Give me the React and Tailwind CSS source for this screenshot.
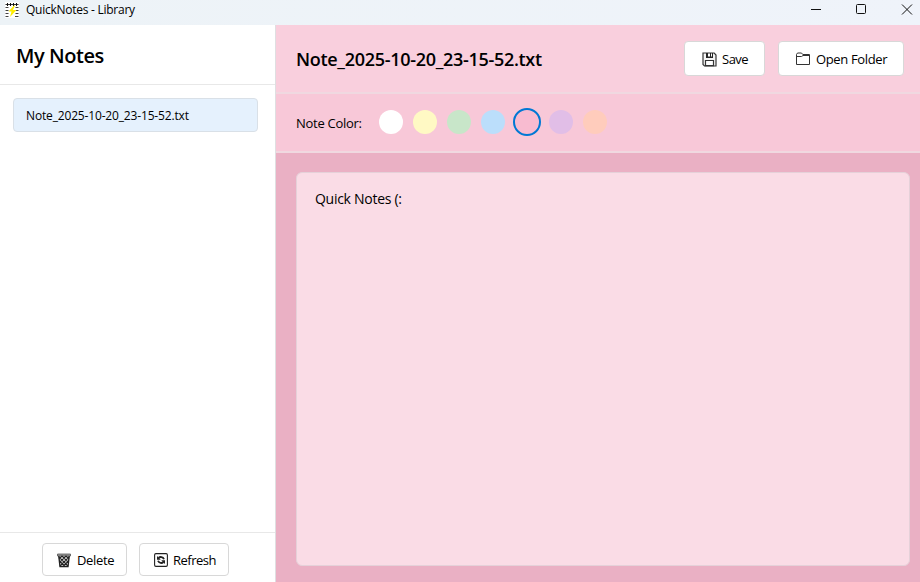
import React from "react";

const swatches = [
  { name: "White", color: "bg-white" },
  { name: "Yellow", color: "bg-[#fff9c4]" },
  { name: "Green", color: "bg-[#c8e6c9]" },
  { name: "Blue", color: "bg-[#bbdefb]" },
  { name: "Pink", color: "bg-[#f8bbd0]", selected: true },
  { name: "Purple", color: "bg-[#e1bee7]" },
  { name: "Orange", color: "bg-[#ffccbc]" },
];

function NotepadIcon() {
  return (
    <svg width="14" height="16" viewBox="0 0 14 16" className="shrink-0">
      <rect width="14" height="16" fill="#fff" />
      <path d="M.5 2.5h13" stroke="#333" strokeWidth="1" />
      <path d="M2.5 1v3M5.5 1v3M8.5 1v3M11.5 1v3" stroke="#111" />
      <path d="M.5 5.5h3M10.5 5.5h3M.5 8.5h3M11 8.5h2.5M.5 11.5h3M10.5 11.5h3M.5 14.5h3M10 14.5h3.5" stroke="#444" />
      <path d="M9 3.5 3.5 9.5h3L5 15l6.5-7H8l2-4.5z" fill="#ffee00" />
    </svg>
  );
}

function SaveIcon() {
  return (
    <svg width="15" height="15" viewBox="0 0 15 15" fill="none" className="shrink-0">
      <path d="M1 1h11.2L14 3v11H2.5L1 12.5z" fill="#f4f4f4" stroke="#353535" strokeWidth="1.2" />
      <path d="M4 1h7v5H4z" fill="#252525" />
      <path d="M6 1.5h2v3H6zM9 1.5h1V4.5H9z" fill="#fff" />
      <path d="M3.5 13.7V8.5h8v5.2z" fill="#fff" stroke="#353535" strokeWidth="1.2" />
    </svg>
  );
}

function FolderIcon() {
  return (
    <svg width="15" height="14" viewBox="0 0 15 14" fill="none" stroke="#333" className="shrink-0">
      <path d="M.5 12.5v-10l1-1.5h4l1.3 1.5h6.7v10zM.5 4.5h5L7 3.5h6.5" />
    </svg>
  );
}

function TrashIcon() {
  return (
    <svg width="14" height="15" viewBox="0 0 14 15" fill="none" stroke="#222" className="shrink-0">
      <path d="M.5 1h13v2H.5z" fill="#999" stroke="#555" strokeWidth=".8" />
      <path d="m1.8 3 1.2 10.5h8L12.2 3" strokeWidth="1.4" />
      <path d="m2 4 9 9M5 3l6.5 6.5M9 3l3 3M2.5 8l5 5M12 4l-9 9M9 3 2.5 9.5M5 3 2 6M11.5 8l-5 5" strokeWidth="1.2" />
    </svg>
  );
}

function RefreshIcon() {
  return (
    <svg width="14" height="14" viewBox="0 0 14 14" fill="none" stroke="#222" className="shrink-0">
      <rect x=".6" y=".6" width="12.8" height="12.8" rx="1.3" strokeWidth="1.1" />
      <path d="M4.5 5C6 3.5 9 3.6 10 6.2M9.5 9C8 10.5 5 10.4 4 7.8" strokeWidth="1.8" />
      <path d="M3 3v3.8h3.8zM11 11V7.2H7.2z" fill="#222" stroke="none" />
    </svg>
  );
}

function Button({ icon, children, className }) {
  return (
    <button className={`flex items-center rounded-[4px] border border-[#d8d8d8] bg-white pt-px text-[13px] text-black ${className}`}>
      {icon}
      <span className="pt-[2px] whitespace-nowrap">{children}</span>
    </button>
  );
}

function TitleBar() {
  return (
    <header className="flex h-[25px] shrink-0 items-start bg-linear-to-r from-[#edf3f7] to-[#eff3fa]">
      <div className="flex items-center gap-[7px] pt-px pl-[5px]">
        <NotepadIcon />
        <span className="text-[12px] leading-[18px] tracking-[-0.26px] whitespace-nowrap">QuickNotes - Library</span>
      </div>
      <svg width="110" height="18" viewBox="0 0 110 18" fill="none" stroke="#111" className="ml-auto">
        <path d="M1 9.5h10" />
        <rect x="46.5" y="4.5" width="9" height="9" rx="1" />
        <path d="m92 4.5 10 10M102 4.5l-10 10" />
      </svg>
    </header>
  );
}

export default function App() {
  return (
    <div className="flex h-[582px] w-[920px] flex-col overflow-hidden bg-white font-['Segoe_UI','Open_Sans','Noto_Sans',sans-serif] text-black">
      <TitleBar />
      <div className="flex min-h-0 flex-1">
        <aside className="flex w-[276px] shrink-0 flex-col border-r border-[#dfdfe1]">
          <div className="flex h-[60px] items-center border-b border-[#e8e8e8] pt-[3px] pl-4">
            <h1 className="text-[20px] leading-6 font-semibold tracking-[-0.45px] whitespace-nowrap">My Notes</h1>
          </div>
          <div className="flex-1 pt-[13px] pr-[17px] pl-[13px]">
            <div className="flex h-[34px] items-center rounded-[4px] border border-[#d9e0e7] bg-[#e5f1fd] pt-[2px] pl-3 text-[12px] tracking-[-0.16px]">
              Note_2025-10-20_23-15-52.txt
            </div>
          </div>
          <div className="flex h-[50px] items-start gap-3 border-t border-[#e8e8e8] pt-[10px] pl-[42px]">
            <Button icon={<TrashIcon />} className="h-[33px] w-[85px] gap-[6px] pl-[14px] tracking-[-0.35px]">Delete</Button>
            <Button icon={<RefreshIcon />} className="h-[33px] w-[90px] gap-[5px] pl-[14px] tracking-[-0.5px]">Refresh</Button>
          </div>
        </aside>
        <main className="flex min-w-0 flex-1 flex-col bg-[#eab0c4]">
          <div className="flex h-[69px] shrink-0 items-center border-b-2 border-[#f0d8e0] bg-[#f9cfdd] pr-4 pl-5">
            <h2 className="pt-[2px] text-[18px] font-semibold tracking-[-0.3px] whitespace-nowrap">Note_2025-10-20_23-15-52.txt</h2>
            <div className="ml-auto flex gap-[13px]">
              <Button icon={<SaveIcon />} className="h-[35px] w-[81px] gap-[5px] pl-[17px] tracking-[-0.5px]">Save</Button>
              <Button icon={<FolderIcon />} className="h-[35px] w-[126px] gap-[5px] pl-[17px] tracking-[-0.36px]">Open Folder</Button>
            </div>
          </div>
          <div className="flex h-[59px] shrink-0 items-center border-b-2 border-[#f0d8e0] bg-[#f8c8d8] pl-5">
            <span className="w-[83px] pt-[2px] text-[13px] tracking-[-0.28px] whitespace-nowrap">Note Color:</span>
            <div className="flex gap-[10px] pb-px">
              {swatches.map((s) => (
                <button
                  key={s.name}
                  aria-label={s.name}
                  className={`rounded-full ${s.color} ${s.selected ? "-m-[2px] size-7 border-2 border-[#0078d4]" : "size-6"}`}
                />
              ))}
            </div>
          </div>
          <div className="flex-1 pt-[19px] pr-[10px] pb-4 pl-5">
            <div className="h-full rounded-[6px] border border-[#e5d1d9] bg-[#fadce6] pt-[16px] pl-[18px] text-[14px] leading-5 tracking-[-0.28px]">
              Quick Notes (:
            </div>
          </div>
        </main>
      </div>
    </div>
  );
}
